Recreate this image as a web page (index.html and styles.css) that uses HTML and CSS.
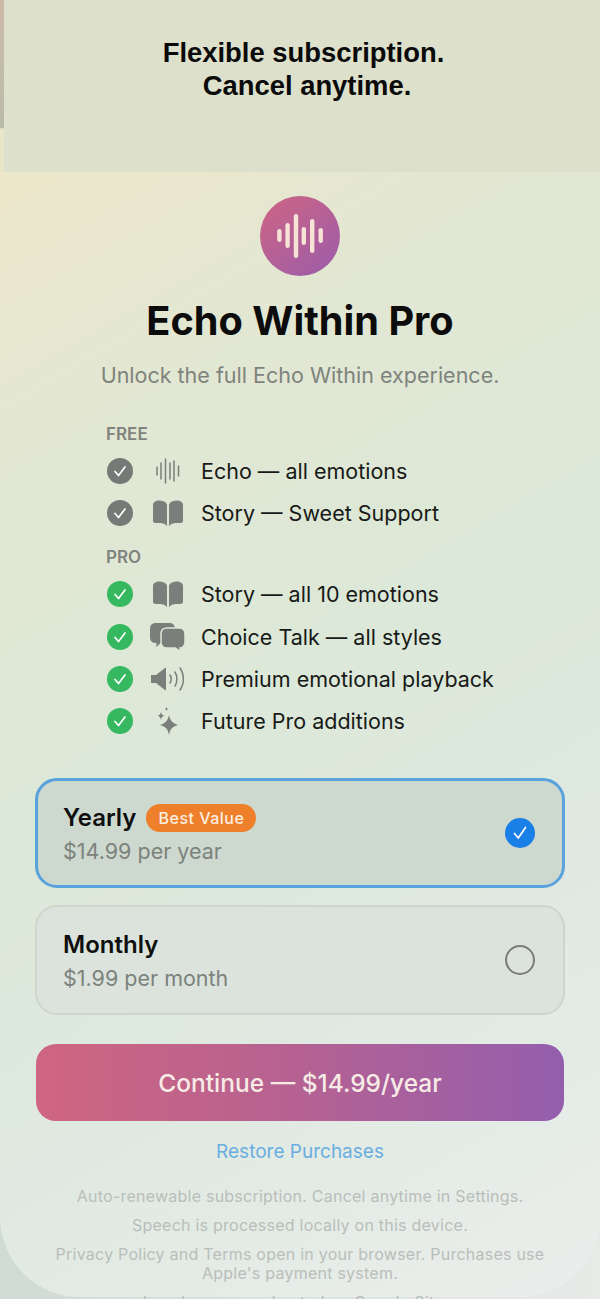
FILE: index.html
```html
<!DOCTYPE html>
<html lang="en">
<head>
    <meta charset="UTF-8">
    <meta name="viewport" content="width=device-width, initial-scale=1.0">
    <title>Echo Within Pro</title>
    <link rel="stylesheet" href="styles.css">
</head>
<body>
    <header class="top">
        <h2>Flexible subscription.<br><span class="line-two">Cancel anytime.</span></h2>
    </header>

    <main class="sheet">
        <div class="logo">
            <svg width="50" height="50" viewBox="0 0 50 50" fill="#f6e3d6">
                <rect x="2.200" y="18" width="4.400" height="13" rx="2.200"/>
                <rect x="10.400" y="12" width="4.400" height="25" rx="2.200"/>
                <rect x="18.800" y="3" width="4.400" height="44" rx="2.200"/>
                <rect x="26.600" y="16" width="4.400" height="18" rx="2.200"/>
                <rect x="35" y="8" width="4.400" height="34" rx="2.200"/>
                <rect x="43.500" y="17" width="4.400" height="15" rx="2.200"/>
            </svg>
        </div>
        <h1>Echo Within Pro</h1>
        <p class="subtitle">Unlock the full Echo Within experience.</p>

        <section class="features">
            <div class="group-label">FREE</div>
            <div class="row">
                <svg class="check" viewBox="0 0 26 26"><circle cx="13" cy="13" r="13" fill="#767a76"/><path d="M8 13.500l3.500 4L18 9" class="tick"/></svg>
                <span class="icon">
                    <svg width="24" height="26" viewBox="0 0 24 26" stroke="#7b7f7b" stroke-width="1.500" stroke-linecap="round"><path d="M1 9v8M5 5v16M9.500 1v24M14 5v16M18 3v20M22.500 8v10"/></svg>
                </span>
                <span>Echo — all emotions</span>
            </div>
            <div class="row">
                <svg class="check" viewBox="0 0 26 26"><circle cx="13" cy="13" r="13" fill="#767a76"/><path d="M8 13.500l3.500 4L18 9" class="tick"/></svg>
                <span class="icon">
                    <svg width="30" height="26" viewBox="0 0 30 26" fill="#7b7f7b"><path d="M0 5C0 2 3 .5 6 .5c4 0 7 1.500 8 4V26c-2-2.500-5-3-9-3-3 0-5 0-5-2zM30 5c0-3-3-4.500-6-4.500-4 0-7 1.500-8 4V26c2-2.500 5-3 9-3 3 0 5 0 5-2z"/></svg>
                </span>
                <span>Story — Sweet Support</span>
            </div>

            <div class="group-label pro">PRO</div>
            <div class="row">
                <svg class="check" viewBox="0 0 26 26"><circle cx="13" cy="13" r="13" fill="#35b860"/><path d="M8 13.500l3.500 4L18 9" class="tick"/></svg>
                <span class="icon">
                    <svg width="30" height="26" viewBox="0 0 30 26" fill="#7b7f7b"><path d="M0 5C0 2 3 .5 6 .5c4 0 7 1.500 8 4V26c-2-2.500-5-3-9-3-3 0-5 0-5-2zM30 5c0-3-3-4.500-6-4.500-4 0-7 1.500-8 4V26c2-2.500 5-3 9-3 3 0 5 0 5-2z"/></svg>
                </span>
                <span>Story — all 10 emotions</span>
            </div>
            <div class="row">
                <svg class="check" viewBox="0 0 26 26"><circle cx="13" cy="13" r="13" fill="#35b860"/><path d="M8 13.500l3.500 4L18 9" class="tick"/></svg>
                <span class="icon">
                    <svg width="38" height="30" viewBox="0 0 38 30"><path d="M7 1h13c4 0 6 2 6 6v8c0 4-2 6-6 6h-8l-5 4 .5-4C3 21 1 19 1 15V7c0-4 2-6 6-6z" fill="#7b7f7b"/><path d="M18 6h12c4 0 6 2 6 6v8c0 3-2 6-5 6l.5 3.500-5.500-3.500h-8c-4 0-6-2-6-6v-8c0-4 2-6 6-6z" fill="#7b7f7b" stroke="#dce8d8" stroke-width="1.500"/></svg>
                </span>
                <span>Choice Talk — all styles</span>
            </div>
            <div class="row">
                <svg class="check" viewBox="0 0 26 26"><circle cx="13" cy="13" r="13" fill="#35b860"/><path d="M8 13.500l3.500 4L18 9" class="tick"/></svg>
                <span class="icon">
                    <svg width="36" height="26" viewBox="0 0 36 26" fill="none"><path d="M1 9h5l9-7c.6-.4 1-.1 1 .6v20.800c0 .7-.4 1-1 .6l-9-7H1z" fill="#7b7f7b"/><path d="M20 9c1.500 2.500 1.500 5.500 0 8M25 6c2.500 4 2.500 10 0 14M30 2c4.500 6.500 4.500 15.500 0 22" stroke="#7b7f7b" stroke-width="1.500" stroke-linecap="round"/></svg>
                </span>
                <span>Premium emotional playback</span>
            </div>
            <div class="row">
                <svg class="check" viewBox="0 0 26 26"><circle cx="13" cy="13" r="13" fill="#35b860"/><path d="M8 13.500l3.500 4L18 9" class="tick"/></svg>
                <span class="icon">
                    <svg width="26" height="30" viewBox="0 0 26 30" fill="#7b7f7b"><path d="M14 9c1 5 3 8 9 10-6 2-8 4-9 10-1-6-3-8-9-10 6-2 8-5 9-10zM6 6c.4 2 1.200 3.200 3.500 3.800C7.200 10.500 6.400 11.500 6 14c-.4-2.500-1.200-3.500-3.500-4.200C4.800 9.200 5.600 8 6 6zM11.500 1c.2 1 .6 1.600 1.700 1.900-1.100.3-1.500.9-1.700 2-.2-1.100-.6-1.700-1.700-2 1.100-.3 1.500-.9 1.700-1.900z"/></svg>
                </span>
                <span>Future Pro additions</span>
            </div>
        </section>

        <section class="plans">
            <div class="plan selected">
                <div class="plan-text">
                    <div class="plan-name">Yearly <span class="badge">Best Value</span></div>
                    <div class="plan-price">$14.99 per year</div>
                </div>
                <svg class="radio" viewBox="0 0 30 30"><circle cx="15" cy="15" r="15" fill="#1a7fe6"/><path d="M9.500 15.500l3.800 4.500L20.500 9.500" class="tick"/></svg>
            </div>
            <div class="plan">
                <div class="plan-text">
                    <div class="plan-name">Monthly</div>
                    <div class="plan-price">$1.99 per month</div>
                </div>
                <svg class="radio" viewBox="0 0 30 30"><circle cx="15" cy="15" r="14" fill="none" stroke="#7b7d7a" stroke-width="2"/></svg>
            </div>
        </section>

        <button class="continue">Continue — $14.99/year</button>
        <a class="restore" href="#">Restore Purchases</a>

        <footer class="legal">
            <p>Auto-renewable subscription. Cancel anytime in Settings.</p>
            <p>Speech is processed locally on this device.</p>
            <p>Privacy Policy and Terms open in your browser. Purchases use Apple's payment system.</p>
            <p>Legal pages are hosted on Google Sites.</p>
        </footer>
    </main>
</body>
</html>
```

FILE: styles.css
```css
* {
    box-sizing: border-box;
}
html, body {
    margin: 0;
    height: 1299px;
    overflow: hidden;
}
body {
    width: 600px;
    font-family: Inter, "Noto Sans", sans-serif;
    background: linear-gradient(90deg, #cfdcd3, #e8eae8);
    color: #111;
}
.top {
    height: 172px;
    padding: 36px 0 0 7px;
    background:
        linear-gradient(180deg, #cfb9a8 0, #c0bcaa 45%, #babaa8 74%, #ebe5c8 75%, #ebe5c8 100%) left top / 4px 100% no-repeat,
        #dde0cb;
    text-align: center;
}
.top h2 {
    margin: 0;
    font-family: "Liberation Sans", Arial, sans-serif;
    font-size: 27.4px;
    line-height: 33px;
    font-weight: bold;
    color: #0a0a0a;
}
.line-two {
    padding-left: 7px;
}
.sheet {
    height: 1125px;
    padding-top: 24px;
    display: flex;
    flex-direction: column;
    align-items: center;
    background: linear-gradient(150deg, #ede7ca 0%, #e3e7d2 18%, #dce8d8 45%, #dfe9e1 70%, #ebeeec 100%);
    border-radius: 0 0 80px 80px;
}
.sheet > * {
    flex: none;
}
.logo {
    width: 80px;
    height: 80px;
    border-radius: 50%;
    display: flex;
    align-items: center;
    justify-content: center;
    background: linear-gradient(140deg, #cf6583, #9a5cab);
}
h1 {
    margin: 21px 0 0;
    font-size: 39.7px;
    line-height: 48px;
    font-weight: 700;
    color: #0c0c0c;
}
.subtitle {
    margin: 16px 0 0;
    font-size: 21.5px;
    line-height: 28px;
    color: #7f837d;
}
.features {
    align-self: flex-start;
    margin: 35px 0 0 106px;
}
.group-label {
    margin-bottom: 6px;
    font-size: 17px;
    line-height: 20px;
    font-weight: 600;
    color: #7f837d;
}
.group-label.pro {
    margin-top: 13px;
}
.row {
    display: flex;
    align-items: center;
    height: 42.2px;
    font-size: 21.5px;
    color: #181a18;
}
.check {
    width: 26px;
    height: 26px;
    margin-left: 1px;
    flex: none;
}
.tick {
    fill: none;
    stroke: #fff;
    stroke-width: 1.7;
    stroke-linecap: round;
    stroke-linejoin: round;
}
.icon {
    width: 38px;
    margin: 0 14px 0 16px;
    display: flex;
    justify-content: center;
}
.plans {
    width: 530px;
    margin-top: 36px;
    display: flex;
    flex-direction: column;
    gap: 17px;
}
.plan {
    height: 110px;
    padding: 0 28px 0 26px;
    display: flex;
    align-items: center;
    justify-content: space-between;
    border: 2px solid #cdd5cd;
    border-radius: 22px;
    background-color: #dbe3dc;
}
.plan.selected {
    padding: 0 27px 0 25px;
    border: 3px solid #5aa2dc;
    background-color: #cdd8cf;
}
.plan-name {
    display: flex;
    align-items: center;
    gap: 10px;
    font-size: 24px;
    line-height: 32px;
    font-weight: 600;
    color: #0f0f0f;
}
.plan-price {
    margin-top: 3px;
    font-size: 21.5px;
    line-height: 28px;
    color: #7c827c;
}
.badge {
    padding: 0 12px;
    font-size: 16px;
    line-height: 28px;
    font-weight: 500;
    letter-spacing: .5px;
    color: #fbeee0;
    background-color: #ee802c;
    border-radius: 14px;
}
.radio {
    width: 30px;
    height: 30px;
}
.continue {
    width: 528px;
    height: 77px;
    margin-top: 29px;
    border: none;
    border-radius: 20px;
    font-family: inherit;
    font-size: 24.5px;
    font-weight: 500;
    color: #f7ebe6;
    background: linear-gradient(90deg, #cf6580, #b86290 45%, #945ead);
}
.restore {
    margin-top: 19px;
    font-size: 19px;
    line-height: 24px;
    color: #6aaee0;
    text-decoration: none;
}
.legal {
    width: 510px;
    margin-top: 23px;
    text-align: center;
    font-size: 16px;
    line-height: 19px;
    letter-spacing: .24px;
    color: #b9beba;
}
.legal p {
    margin: 0 0 10px;
}
```
